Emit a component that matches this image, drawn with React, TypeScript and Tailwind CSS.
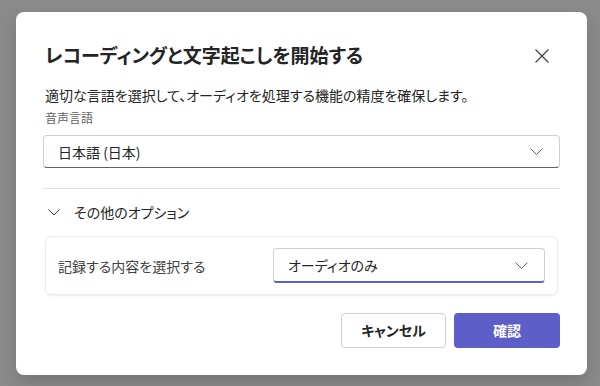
import React from 'react';

const font = { fontFamily: '"Noto Sans CJK JP", "Noto Sans", sans-serif' };

const Chevron = () => (
  <svg width="13" height="7" viewBox="0 0 13 7" fill="none">
    <path d="M0.5 0.5L6.5 6.5L12.5 0.5" stroke="#616161" strokeWidth="1" />
  </svg>
);

const Dropdown = ({ value, focused = false, className = '' }: { value: string; focused?: boolean; className?: string }) => (
  <div
    className={`flex items-center justify-between rounded-[4px] border border-[#d1d1d1] bg-white pl-[14px] pr-[16px] ${
      focused ? 'border-b-2 border-b-[#5b5fc7]' : 'border-b-[#616161]'
    } ${className}`}
  >
    <span className="text-[14px] leading-5 text-[#242424]">{value}</span>
    <Chevron />
  </div>
);

export default function App() {
  return (
    <div className="flex h-[386px] w-[600px] items-start bg-[#8a8a8a] pl-4 pt-3 [font-feature-settings:'palt']" style={font}>
      <div className="flex h-[363px] w-[571px] flex-col rounded-lg bg-white px-[27px] pt-[29px] shadow-[0_8px_16px_rgba(0,0,0,0.14)]">
        {/* Header */}
        <div className="flex h-7 items-center justify-between">
          <h1 className="pl-[2px] text-[19px] font-semibold leading-7 text-[#242424]">
            レコーディングと文字起こしを開始する
          </h1>
          <button className="mr-[8px] mt-[2px] flex h-5 w-5 items-center justify-center">
            <svg width="14" height="14" viewBox="0 0 14 14" fill="none">
              <path d="M0.5 0.5L13.5 13.5M13.5 0.5L0.5 13.5" stroke="#424242" strokeWidth="1.2" />
            </svg>
          </button>
        </div>

        <p className="mt-[16px] pl-[2px] text-[14px] leading-5 text-[#242424]">
          適切な言語を選択して、オーディオを処理する機能の精度を確保します。
        </p>
        <label className="mt-[5px] pl-[2px] text-[12px] leading-4 text-[#616161]">音声言語</label>

        <Dropdown value="日本語 (日本)" className="mt-[9px] h-[33px]" />

        <div className="mt-[20px] h-px bg-[#e0e0e0]" />

        {/* More options */}
        <div className="mt-[13px] flex h-5 items-center gap-[14px] pl-[5px]">
          <svg width="12" height="7" viewBox="0 0 12 7" fill="none">
            <path d="M0.5 0.5L6 6L11.5 0.5" stroke="#424242" strokeWidth="1" />
          </svg>
          <span className="text-[14px] leading-5 text-[#242424]">その他のオプション</span>
        </div>

        <div className="mx-[2px] mt-[14px] flex h-[59px] items-center justify-between rounded-md border border-[#ebebeb] px-3 shadow-[0_1px_2px_rgba(0,0,0,0.08)]">
          <span className="text-[14px] leading-5 text-[#424242]">記録する内容を選択する</span>
          <Dropdown value="オーディオのみ" focused className="h-[35px] w-[272px]" />
        </div>

        {/* Footer */}
        <div className="mt-[18px] flex justify-end gap-2">
          <button className="h-[35px] w-[105px] rounded-[4px] border border-[#d1d1d1] bg-white text-[14px] font-semibold text-[#242424]">
            キャンセル
          </button>
          <button className="h-[35px] w-[106px] rounded-[4px] bg-[#5b5fc7] text-[14px] font-semibold text-white">
            確認
          </button>
        </div>
      </div>
    </div>
  );
}
